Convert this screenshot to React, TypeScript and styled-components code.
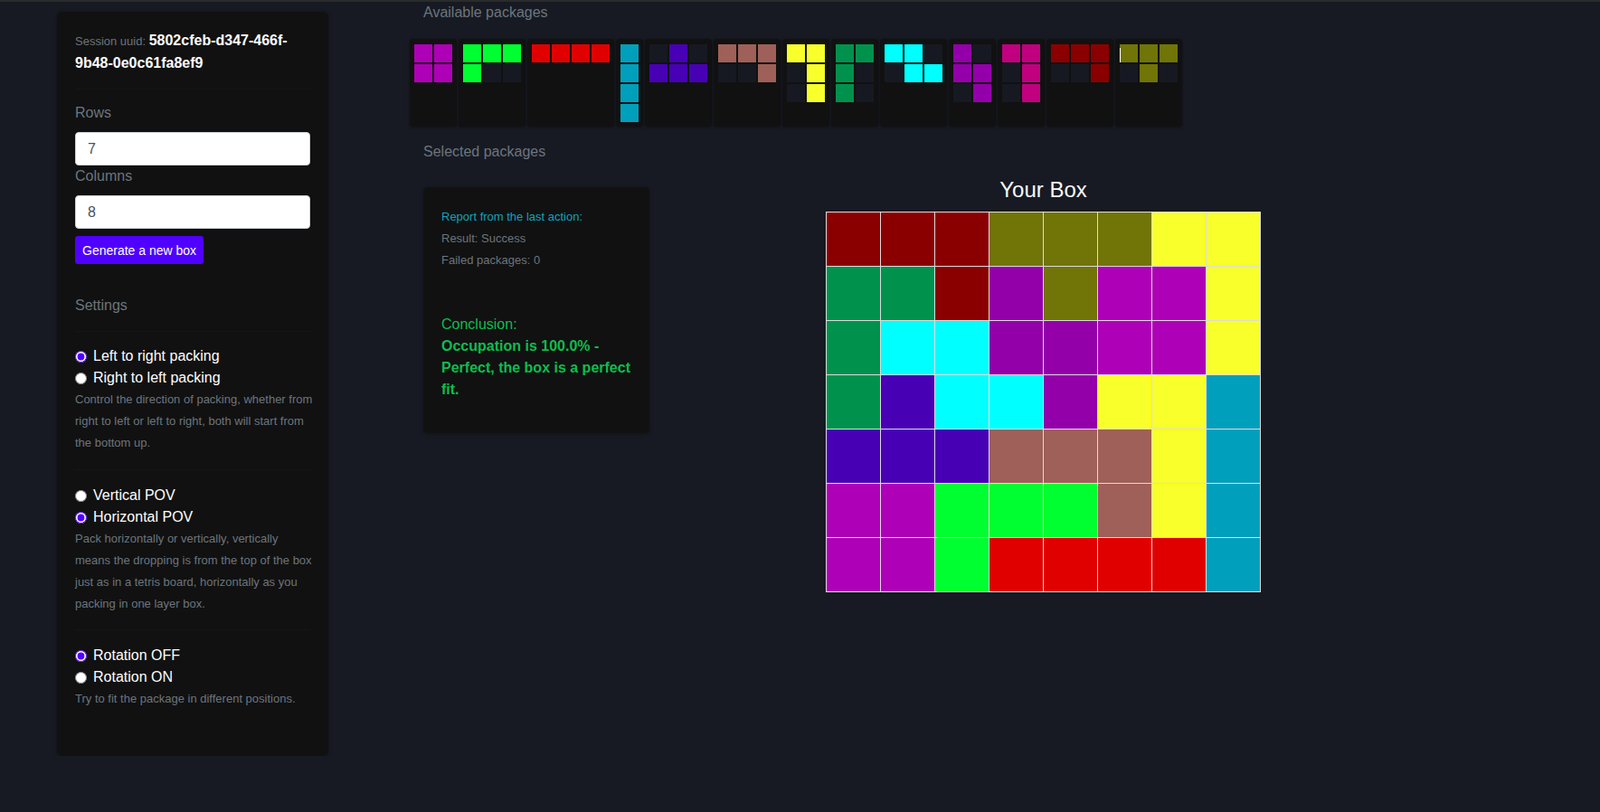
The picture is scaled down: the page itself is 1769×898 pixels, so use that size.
import React from "react";
import styled, { createGlobalStyle } from "styled-components";

const GlobalStyle = createGlobalStyle`
  html, body {
    margin: 0;
    padding: 0;
    min-height: 100%;
    background: #171a23;
    font-family: "Liberation Sans", Arial, sans-serif;
  }
`;

const COLORS: Record<string, string> = {
  MA: "#ae00b6",
  LI: "#00ff31",
  RE: "#e10000",
  TB: "#009fbb",
  IN: "#4700b4",
  BR: "#9e6058",
  YE: "#f8ff2b",
  GR: "#00924c",
  CY: "#00ffff",
  PU: "#9300a9",
  PK: "#c0007f",
  DR: "#8a0000",
  OL: "#717406",
};

type Piece = { color: string; shape: number[][]; caret?: boolean };

const PACKAGES: Piece[] = [
  { color: "MA", shape: [[1, 1], [1, 1]] },
  { color: "LI", shape: [[1, 1, 1], [1, 0, 0]] },
  { color: "RE", shape: [[1, 1, 1, 1]] },
  { color: "TB", shape: [[1], [1], [1], [1]] },
  { color: "IN", shape: [[0, 1, 0], [1, 1, 1]] },
  { color: "BR", shape: [[1, 1, 1], [0, 0, 1]] },
  { color: "YE", shape: [[1, 1], [0, 1], [0, 1]] },
  { color: "GR", shape: [[1, 1], [1, 0], [1, 0]] },
  { color: "CY", shape: [[1, 1, 0], [0, 1, 1]] },
  { color: "PU", shape: [[1, 0], [1, 1], [0, 1]] },
  { color: "PK", shape: [[1, 1], [0, 1], [0, 1]] },
  { color: "DR", shape: [[1, 1, 1], [0, 0, 1]] },
  { color: "OL", shape: [[1, 1, 1], [0, 1, 0]], caret: true },
];

const BOX = [
  "DR DR DR OL OL OL YE YE",
  "GR GR DR PU OL MA MA YE",
  "GR CY CY PU PU MA MA YE",
  "GR IN CY CY PU YE YE TB",
  "IN IN IN BR BR BR YE TB",
  "MA MA LI LI LI BR YE TB",
  "MA MA LI RE RE RE RE TB",
].map((r) => r.split(" "));

const TopEdge = styled.div`
  height: 2px;
  background: #2b2b2c;
`;

const Layout = styled.div`
  display: flex;
  align-items: flex-start;
  padding-left: 63px;
`;

const Sidebar = styled.aside`
  width: 300px;
  box-sizing: border-box;
  margin-top: 11px;
  padding: 20px 20px 35px;
  background: #111111;
  border-radius: 6px;
  box-shadow: 0 1px 4px rgba(0, 0, 0, 0.3);
`;

const Session = styled.div`
  font-size: 13px;
  line-height: 24px;
  color: #6c757d;
`;

const SessionId = styled.span`
  font-size: 16px;
  font-weight: bold;
  color: #ffffff;
`;

const Divider = styled.div<{ $top?: number }>`
  height: 1px;
  background: #161616;
  margin-top: ${(p) => p.$top ?? 0}px;
`;

const FieldLabel = styled.div<{ $gap?: number }>`
  font-size: 16px;
  line-height: 24px;
  color: #6c757d;
  margin-top: ${(p) => p.$gap ?? 0}px;
  margin-bottom: 9px;
`;

const NumberInput = styled.input`
  display: block;
  width: 100%;
  height: 37px;
  box-sizing: border-box;
  padding: 0 13px;
  border: 1px solid #ced4da;
  border-radius: 4px;
  background: #ffffff;
  color: #495057;
  font-family: inherit;
  font-size: 16px;
  outline: none;
`;

const GenerateButton = styled.button`
  margin-top: 8px;
  height: 31px;
  padding: 0 8px;
  border: none;
  border-radius: 3px;
  background: #5000ff;
  color: #ffffff;
  font-family: inherit;
  font-size: 14px;
  cursor: pointer;
`;

const SettingsTitle = styled.div`
  margin-top: 34px;
  font-size: 16px;
  line-height: 24px;
  color: #6c757d;
`;

const SettingsGroup = styled.section`
  padding: 16px 0 16px;
  border-bottom: 1px solid #161616;

  &:first-of-type {
    padding-top: 15px;
    padding-bottom: 17px;
  }

  &:last-child {
    border-bottom: none;
  }
`;

const RadioRow = styled.label`
  display: flex;
  align-items: center;
  height: 24px;
  font-size: 16px;
  color: #ffffff;

  input {
    width: 13px;
    height: 13px;
    margin: 0 7px 0 0;
    accent-color: #5000ff;
  }
`;

const Help = styled.p`
  margin: 0 -6px 0 0;
  font-size: 13px;
  line-height: 24px;
  color: #6c757d;
`;

const Main = styled.main`
  margin-left: 90px;
`;

const SectionTitle = styled.div<{ $gap?: number }>`
  padding-left: 15px;
  margin-top: ${(p) => p.$gap ?? 0}px;
  font-size: 16px;
  line-height: 24px;
  color: #6c757d;
`;

const PackageRow = styled.div`
  display: flex;
  gap: 2px;
  margin-top: 17px;
`;

const PackageCard = styled.div<{ $cols: number }>`
  position: relative;
  display: grid;
  grid-template-columns: repeat(${(p) => p.$cols}, 20px);
  grid-auto-rows: 20px;
  gap: 2px;
  align-content: start;
  padding: 6px 5px 5px;
  background: #111111;
  border-radius: 4px;
  box-shadow: 0 1px 3px rgba(0, 0, 0, 0.35);
`;

const PieceCell = styled.div<{ $color?: string }>`
  background: ${(p) => p.$color ?? "#161922"};
`;

const Caret = styled.span`
  position: absolute;
  left: 5px;
  top: 10px;
  width: 1px;
  height: 16px;
  background: #ffffff;
`;

const ResultRow = styled.div`
  display: flex;
  align-items: flex-start;
  margin-top: 15px;
  padding-left: 15px;
`;

const ReportCard = styled.div`
  width: 250px;
  box-sizing: border-box;
  margin-top: 12px;
  padding: 21px 14px 36px 20px;
  background: #111111;
  border-radius: 5px;
  box-shadow: 0 1px 4px rgba(0, 0, 0, 0.3);
`;

const ReportLine = styled.div<{ $accent?: boolean }>`
  font-size: 13px;
  line-height: 24px;
  color: ${(p) => (p.$accent ? "#17a2b8" : "#6c757d")};
`;

const Conclusion = styled.div`
  margin-top: 47px;
  font-size: 16px;
  line-height: 24px;
  color: #0dbd4e;

  strong {
    display: block;
  }
`;

const BoxSection = styled.div`
  display: flex;
  flex-direction: column;
  align-items: center;
  margin-left: 195px;
`;

const BoxTitle = styled.div`
  font-size: 24px;
  line-height: 29px;
  color: #f8f9fa;
`;

const BoxGrid = styled.div<{ $cols: number }>`
  display: grid;
  grid-template-columns: repeat(${(p) => p.$cols}, 59px);
  grid-auto-rows: 59px;
  gap: 1px;
  padding: 1px;
  margin-top: 10px;
  background: #dcdcdc;
`;

const BoxCell = styled.div<{ $color: string }>`
  background: ${(p) => p.$color};
`;

function PackagePreview({ piece }: { piece: Piece }) {
  const cols = piece.shape[0].length;
  return (
    <PackageCard $cols={cols}>
      {piece.shape.flatMap((row, r) =>
        row.map((v, c) => (
          <PieceCell key={`${r}-${c}`} $color={v ? COLORS[piece.color] : undefined} />
        ))
      )}
      {piece.caret && <Caret />}
    </PackageCard>
  );
}

export default function App() {
  return (
    <>
      <GlobalStyle />
      <TopEdge />
      <Layout>
        <Sidebar>
          <Session>
            Session uuid: <SessionId>5802cfeb-d347-466f-9b48-0e0c61fa8ef9</SessionId>
          </Session>
          <Divider $top={15} />
          <FieldLabel $gap={14}>Rows</FieldLabel>
          <NumberInput type="text" defaultValue="7" />
          <FieldLabel>Columns</FieldLabel>
          <NumberInput type="text" defaultValue="8" />
          <GenerateButton>Generate a new box</GenerateButton>

          <SettingsTitle>Settings</SettingsTitle>
          <Divider $top={16} />

          <SettingsGroup>
            <RadioRow>
              <input type="radio" name="direction" defaultChecked />
              Left to right packing
            </RadioRow>
            <RadioRow>
              <input type="radio" name="direction" />
              Right to left packing
            </RadioRow>
            <Help>
              Control the direction of packing, whether from right to left or left to right, both will start from the bottom up.
            </Help>
          </SettingsGroup>

          <SettingsGroup>
            <RadioRow>
              <input type="radio" name="pov" />
              Vertical POV
            </RadioRow>
            <RadioRow>
              <input type="radio" name="pov" defaultChecked />
              Horizontal POV
            </RadioRow>
            <Help>
              Pack horizontally or vertically, vertically means the dropping is from the top of the box just as in a tetris board, horizontally as you packing in one layer box.
            </Help>
          </SettingsGroup>

          <SettingsGroup>
            <RadioRow>
              <input type="radio" name="rotation" defaultChecked />
              Rotation OFF
            </RadioRow>
            <RadioRow>
              <input type="radio" name="rotation" />
              Rotation ON
            </RadioRow>
            <Help>Try to fit the package in different positions.</Help>
          </SettingsGroup>
        </Sidebar>

        <Main>
          <SectionTitle>Available packages</SectionTitle>
          <PackageRow>
            {PACKAGES.map((p, i) => (
              <PackagePreview key={i} piece={p} />
            ))}
          </PackageRow>
          <SectionTitle $gap={16}>Selected packages</SectionTitle>

          <ResultRow>
            <ReportCard>
              <ReportLine $accent>Report from the last action:</ReportLine>
              <ReportLine>Result: Success</ReportLine>
              <ReportLine>Failed packages: 0</ReportLine>
              <Conclusion>
                Conclusion:
                <strong>Occupation is 100.0% - Perfect, the box is a perfect fit.</strong>
              </Conclusion>
            </ReportCard>

            <BoxSection>
              <BoxTitle>Your Box</BoxTitle>
              <BoxGrid $cols={8}>
                {BOX.flatMap((row, r) =>
                  row.map((k, c) => <BoxCell key={`${r}-${c}`} $color={COLORS[k]} />)
                )}
              </BoxGrid>
            </BoxSection>
          </ResultRow>
        </Main>
      </Layout>
    </>
  );
}
